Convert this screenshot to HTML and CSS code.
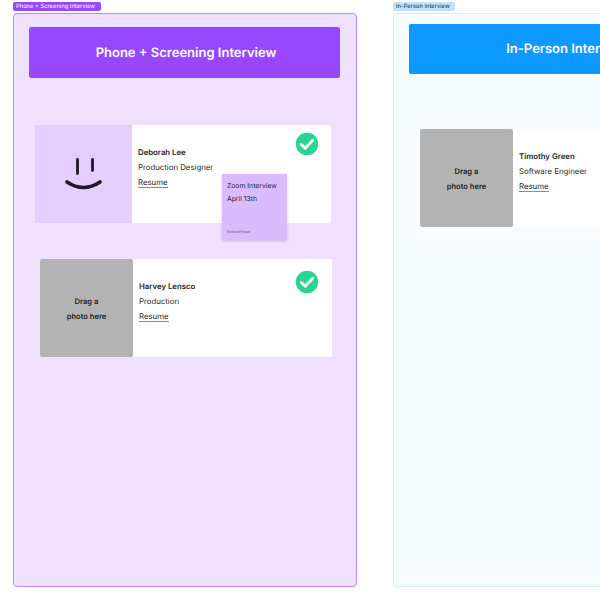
FILE: index.html
```html
<!DOCTYPE html>
<html lang="en">
<head>
    <meta charset="UTF-8">
    <meta name="viewport" content="width=device-width, initial-scale=1.0">
    <title>Interview Board</title>
    <link rel="stylesheet" href="styles.css">
</head>
<body>
    <main class="canvas">
        <section class="column column-phone">
            <div class="column-label">Phone + Screening Interview</div>
            <div class="board">
                <h1 class="board-title">Phone + Screening Interview</h1>

                <article class="card card-deborah">
                    <div class="photo photo-smile">
                        <svg width="70" height="40" viewBox="0 0 70 40" fill="none" stroke="#1d1b20" stroke-linecap="round">
                            <path d="M28.5 4.5v14M43.500 4.500v11" stroke-width="2.800"/>
                            <path d="M18 27Q34.500 38 51 27" stroke-width="3.600"/>
                        </svg>
                    </div>
                    <div class="details">
                        <div class="name">Deborah Lee</div>
                        <div class="role">Production Designer</div>
                        <a class="resume">Resume</a>
                    </div>
                    <svg class="check" width="24" height="24" viewBox="0 0 24 24">
                        <circle cx="12" cy="12" r="11.200" fill="#29d590"/>
                        <path d="M6.200 12.400l4 3.800 7.600-8" fill="none" stroke="#fff" stroke-width="2.800" stroke-linecap="round" stroke-linejoin="round"/>
                    </svg>
                    <div class="sticky">
                        <div class="sticky-line">Zoom Interview</div>
                        <div class="sticky-line">April 13th</div>
                        <div class="sticky-author">Richard Perez</div>
                    </div>
                </article>

                <article class="card card-harvey">
                    <div class="photo photo-empty">Drag a<br>photo here</div>
                    <div class="details">
                        <div class="name">Harvey Lensco</div>
                        <div class="role">Production</div>
                        <a class="resume">Resume</a>
                    </div>
                    <svg class="check" width="24" height="24" viewBox="0 0 24 24">
                        <circle cx="12" cy="12" r="11.200" fill="#29d590"/>
                        <path d="M6.200 12.400l4 3.800 7.600-8" fill="none" stroke="#fff" stroke-width="2.800" stroke-linecap="round" stroke-linejoin="round"/>
                    </svg>
                </article>
            </div>
        </section>

        <section class="column column-person">
            <div class="column-label">In-Person Interview</div>
            <div class="board">
                <h1 class="board-title">In-Person Interview</h1>

                <article class="card card-timothy">
                    <div class="photo photo-empty">Drag a<br>photo here</div>
                    <div class="details">
                        <div class="name">Timothy Green</div>
                        <div class="role">Software Engineer</div>
                        <a class="resume">Resume</a>
                    </div>
                </article>
            </div>
        </section>
    </main>
</body>
</html>
```

FILE: styles.css
```css
html, body {
    margin: 0;
    height: 100%;
    overflow: hidden;
    background: #fff;
}

body {
    font-family: "Inter", "Liberation Sans", sans-serif;
    color: #1e1e1e;
    text-rendering: geometricPrecision;
}

.canvas {
    display: flex;
    gap: 36px;
    padding: 2px 0 0 13px;
    width: 900px;
}

.column {
    flex: none;
    width: 344px;
}

.column-person {
    width: 440px;
}

/* Section label tabs */
.column-label {
    box-sizing: border-box;
    width: 88px;
    height: 9px;
    padding: 0 3px;
    margin-bottom: 2px;
    border-radius: 2px;
    font-size: 5.8px;
    font-weight: 400;
    line-height: 9px;
    white-space: nowrap;
}

.column-phone .column-label {
    background: #9747ff;
    color: #fff;
}

.column-person .column-label {
    width: 62px;
    background: #bde3ff;
    color: #1e1e1e;
}

.board {
    box-sizing: border-box;
    height: 574px;
    border-radius: 4px;
    border: 1px solid;
}

.column-phone .board {
    padding: 13px 15px;
    background: #f0e0ff;
    border-color: #bb85ff;
}

.column-person .board {
    padding: 10px 15px;
    background: #f5fbff;
    border-color: #d6eeff;
}

.board-title {
    display: flex;
    align-items: center;
    justify-content: center;
    box-sizing: border-box;
    height: 51px;
    margin: 0;
    border-radius: 2px;
    color: #fff;
    font-size: 13px;
    font-weight: 600;
}

.column-phone .board-title {
    width: 311px;
    padding: 1px 0 0 3px;
    background: #9747ff;
}

.column-person .board-title {
    width: 318px;
    height: 50px;
    background: #0d99ff;
}

/* Candidate cards */
.card {
    position: relative;
    display: flex;
    height: 98px;
    background: #fff;
    border-radius: 2px;
}

.card-deborah {
    width: 296px;
    margin: 47px 0 0 6px;
}

.card-harvey {
    width: 292px;
    margin: 36px 0 0 11px;
}

.card-timothy {
    width: 300px;
    margin: 55px 0 0 11px;
}

.photo {
    flex: none;
    display: flex;
    align-items: center;
    justify-content: center;
    box-sizing: border-box;
    height: 100%;
}

.photo-smile {
    width: 97px;
    background: #e5ceff;
}

.photo-smile svg {
    margin-top: 1px;
}

.photo-empty {
    width: 93px;
    padding-top: 2px;
    background: #b3b3b3;
    border-radius: 2px;
    color: #1e1e1e;
    font-size: 7.6px;
    font-weight: 600;
    line-height: 15px;
    text-align: center;
}

.details {
    padding: 20px 0 0 6px;
    font-size: 7.8px;
    line-height: 15px;
    white-space: nowrap;
}

.name {
    font-weight: 600;
}

.role {
    color: #2c2c2c;
}

.resume {
    display: inline-block;
    line-height: 10px;
    border-bottom: 1px solid #8a8a8a;
}

.check {
    position: absolute;
    top: 7px;
    right: 12px;
}

.card-harvey .check {
    top: 11px;
    right: 13px;
}

/* Sticky note laid over the first card */
.sticky {
    position: absolute;
    left: 187px;
    top: 49px;
    box-sizing: border-box;
    width: 65px;
    height: 66px;
    padding: 6px 5px 0;
    background: #dbbbff;
    box-shadow: 0 1px 3px rgba(0, 0, 0, 0.18);
    font-size: 6.8px;
    line-height: 12.5px;
}

.sticky-author {
    position: absolute;
    left: 5px;
    bottom: 5px;
    font-size: 3.5px;
    line-height: 6px;
    color: #555;
}
```
